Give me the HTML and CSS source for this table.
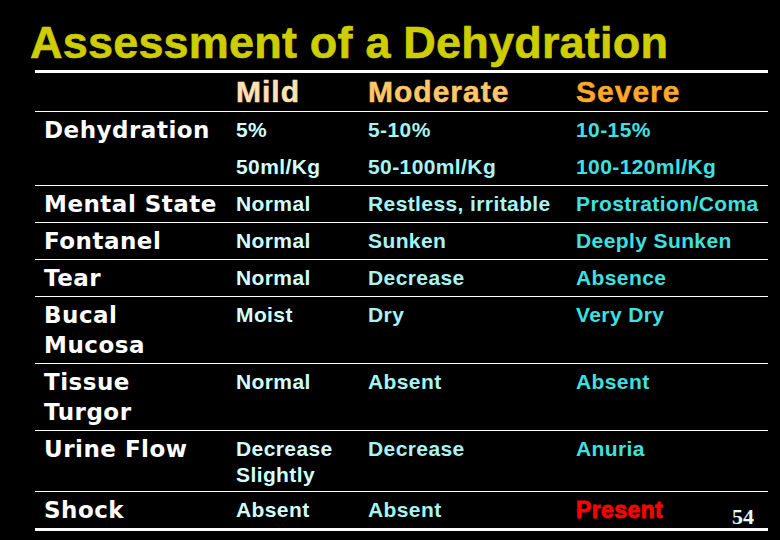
FILE: index.html
```html
<!DOCTYPE html>
<html lang="en">
<head>
<meta charset="utf-8">
<title>Assessment of a Dehydration</title>
<link rel="stylesheet" href="styles.css">
</head>
<body>
<div class="slide">
  <h1 class="title">Assessment of a Dehydration</h1>
  <div class="table">
    <div class="row head">
      <div class="label"></div>
      <div class="h mild">Mild</div>
      <div class="h moderate">Moderate</div>
      <div class="h severe">Severe</div>
    </div>
    <div class="row">
      <div class="label">Dehydration</div>
      <div class="cell mild stack"><span>5%</span><span>50ml/Kg</span></div>
      <div class="cell moderate stack"><span>5-10%</span><span>50-100ml/Kg</span></div>
      <div class="cell severe stack"><span>10-15%</span><span>100-120ml/Kg</span></div>
    </div>
    <div class="row">
      <div class="label">Mental State</div>
      <div class="cell mild">Normal</div>
      <div class="cell moderate">Restless, irritable</div>
      <div class="cell severe">Prostration/Coma</div>
    </div>
    <div class="row">
      <div class="label">Fontanel</div>
      <div class="cell mild">Normal</div>
      <div class="cell moderate">Sunken</div>
      <div class="cell severe">Deeply Sunken</div>
    </div>
    <div class="row">
      <div class="label">Tear</div>
      <div class="cell mild">Normal</div>
      <div class="cell moderate">Decrease</div>
      <div class="cell severe">Absence</div>
    </div>
    <div class="row">
      <div class="label">Bucal<br>Mucosa</div>
      <div class="cell mild">Moist</div>
      <div class="cell moderate">Dry</div>
      <div class="cell severe">Very Dry</div>
    </div>
    <div class="row">
      <div class="label">Tissue<br>Turgor</div>
      <div class="cell mild">Normal</div>
      <div class="cell moderate">Absent</div>
      <div class="cell severe">Absent</div>
    </div>
    <div class="row">
      <div class="label">Urine Flow</div>
      <div class="cell mild">Decrease<br>Slightly</div>
      <div class="cell moderate">Decrease</div>
      <div class="cell severe">Anuria</div>
    </div>
    <div class="row last">
      <div class="label">Shock</div>
      <div class="cell mild">Absent</div>
      <div class="cell moderate">Absent</div>
      <div class="cell present">Present</div>
    </div>
  </div>
  <div class="page-num">54</div>
</div>
</body>
</html>
```

FILE: styles.css
```css
html, body {
  margin: 0;
  padding: 0;
  background: #000;
}

.slide {
  position: relative;
  width: 780px;
  height: 540px;
  background: #000;
  overflow: hidden;
}

.title {
  margin: 19px 0 0 0;
  padding-left: 30px;
  height: 48px;
  font-family: "Liberation Sans", Arial, sans-serif;
  font-weight: bold;
  font-size: 45px;
  line-height: 48px;
  letter-spacing: 0.2px;
  color: #cdcd00;
  -webkit-text-stroke: 0.6px #cdcd00;
  white-space: nowrap;
}

.table {
  margin: 3px 0 0 35px;
  width: 733px;
  border-top: 3px solid #fff;
  border-bottom: 3px solid #fff;
}

.row {
  display: grid;
  grid-template-columns: 201px 132px 208px 1fr;
  border-bottom: 1px solid #fff;
}

.row.last {
  border-bottom: none;
}

.label {
  padding: 3px 0 3px 9px;
  font-family: "DejaVu Sans", Verdana, sans-serif;
  font-weight: bold;
  font-size: 23px;
  line-height: 30px;
  letter-spacing: 0.5px;
  color: #fff;
  white-space: nowrap;
}

.h {
  padding: 3px 0;
  font-family: "Liberation Sans", Arial, sans-serif;
  font-weight: bold;
  font-size: 30px;
  line-height: 32px;
  letter-spacing: 1px;
  white-space: nowrap;
}

.h.mild { color: #ffe2b4; -webkit-text-stroke: 0.5px #ffe2b4; }
.h.moderate { color: #ffc766; -webkit-text-stroke: 0.5px #ffc766; }
.h.severe { color: #ffa82a; -webkit-text-stroke: 0.5px #ffa82a; }

.cell {
  padding: 5px 0 3px 0;
  font-family: "Liberation Sans", Arial, sans-serif;
  font-weight: bold;
  font-size: 21px;
  line-height: 26px;
  letter-spacing: 0.4px;
  white-space: nowrap;
}

.stack {
  display: flex;
  flex-direction: column;
  gap: 11px;
  padding-bottom: 5px;
}

.cell.mild { color: #d2ffff; }
.cell.moderate { color: #a8f4f4; }
.cell.severe { color: #3fe0e0; }

.cell.present {
  color: #ff0000;
  font-size: 23px;
  letter-spacing: 0.4px;
  -webkit-text-stroke: 0.8px #ff0000;
}

.page-num {
  position: absolute;
  left: 732px;
  top: 505px;
  font-family: "Liberation Serif", "Times New Roman", serif;
  font-weight: bold;
  font-size: 22px;
  line-height: 24px;
  color: #e6ffff;
}
```
